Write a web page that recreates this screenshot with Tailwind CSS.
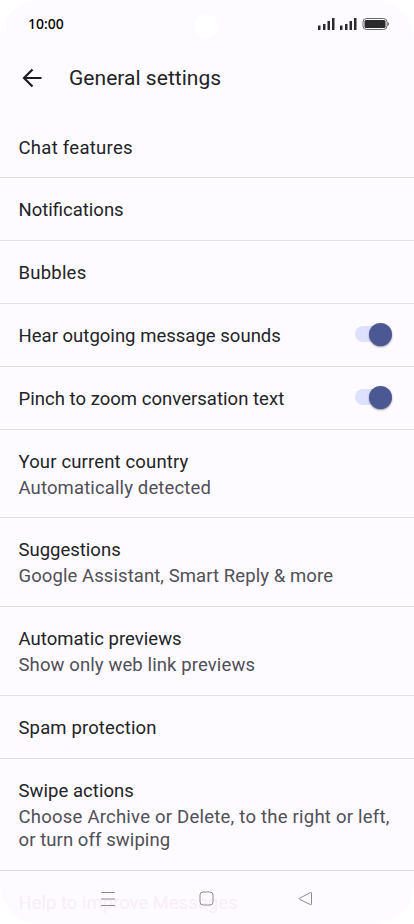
<!DOCTYPE html>
<html lang="en">
<head>
    <meta charset="UTF-8">
    <meta name="viewport" content="width=device-width, initial-scale=1.0">
    <title>General settings</title>
    <script src="https://cdn.jsdelivr.net/npm/@tailwindcss/browser@4"></script>
</head>
<body class="bg-white">
    <div class="relative flex flex-col w-[414px] h-[924px] overflow-hidden rounded-[40px] bg-[#fdfbff] font-['Roboto',sans-serif] text-[18.5px] leading-[24px] text-[#232327]">

        <!-- Status bar -->
        <div class="flex shrink-0 items-center justify-between h-12 pl-7 pr-6">
            <span class="font-['Noto_Sans',sans-serif] text-sm font-medium leading-5 text-black">10:00</span>
            <div class="absolute left-[194px] top-[14px] size-6 rounded-full bg-white"></div>
            <svg class="w-[72px] h-3" viewBox="0 0 72 12" fill="#2a2a2c">
                <path d="M0 7.500h2.500v4.500H0zM5 6h2.500v6H5zM9.500 3h2.500v9H9.500zM14 0h2.500v12h-2.500zM22 7.500h2.500v4.500H22zM27 6h2.500v6h-2.500zM31.500 3h2.500v9H31.500zM36 0h2.500v12h-2.500z"/>
                <rect x="45" y=".5" width="24" height="11" rx="3.500" fill="none" stroke="#67676a"/>
                <rect x="46.500" y="2" width="21" height="8" rx="1.500"/>
                <path d="M69.500 4q1.500 .5 1.500 2t-1.500 2z" fill="#67676a"/>
            </svg>
        </div>

        <!-- App bar -->
        <div class="flex shrink-0 items-center h-[68px] pl-[22px] pb-2">
            <svg class="size-5" viewBox="0 0 20 20" fill="none" stroke="#1b1b1f" stroke-width="2.200">
                <path d="M19.500 10H2.500M10.500 1.500L2 10l8.500 8.500"/>
            </svg>
            <h1 class="ml-[27px] text-[21px] leading-7 font-normal tracking-[0.03px] whitespace-nowrap">General settings</h1>
        </div>

        <!-- Settings list -->
        <div class="flex flex-col shrink-0 whitespace-nowrap">
            <div class="flex items-center h-[62px] px-[18.5px] pt-0.5 border-b border-[#e0dfe3]"><span class="tracking-[0.28px]">Chat features</span></div>
            <div class="flex items-center h-[63px] px-[18.5px] pt-0.5 border-b border-[#e0dfe3]"><span>Notifications</span></div>
            <div class="flex items-center h-[63px] px-[18.5px] pt-0.5 border-b border-[#e0dfe3]"><span class="tracking-[0.22px]">Bubbles</span></div>
            <div class="flex items-center justify-between h-[63px] pl-[18.5px] pr-[22.5px] border-b border-[#e0dfe3]">
                <span class="pt-0.5 tracking-[0.02px]">Hear outgoing message sounds</span>
                <div class="flex items-center justify-end w-[37px] h-4 mb-0.5 rounded-full bg-[#dde1ff]">
                    <div class="size-[23px] shrink-0 rounded-full bg-[#4b5893] shadow-[0_1px_2px_rgba(0,0,0,0.4)]"></div>
                </div>
            </div>
            <div class="flex items-center justify-between h-[63px] pl-[18.5px] pr-[22.5px] border-b border-[#e0dfe3]">
                <span class="pt-0.5 tracking-[0.03px]">Pinch to zoom conversation text</span>
                <div class="flex items-center justify-end w-[37px] h-4 mb-0.5 rounded-full bg-[#dde1ff]">
                    <div class="size-[23px] shrink-0 rounded-full bg-[#4b5893] shadow-[0_1px_2px_rgba(0,0,0,0.4)]"></div>
                </div>
            </div>
            <div class="flex flex-col justify-center gap-0.5 h-[88px] px-[18.5px] pt-0.5 border-b border-[#e0dfe3]">
                <span class="tracking-[0.15px]">Your current country</span>
                <span class="tracking-[0.13px] text-[#504f57]">Automatically detected</span>
            </div>
            <div class="flex flex-col justify-center gap-0.5 h-[89px] px-[18.5px] pt-0.5 border-b border-[#e0dfe3]">
                <span>Suggestions</span>
                <span class="tracking-[0.08px] text-[#504f57]">Google Assistant, Smart Reply &amp; more</span>
            </div>
            <div class="flex flex-col justify-center gap-0.5 h-[89px] px-[18.5px] pt-0.5 border-b border-[#e0dfe3]">
                <span class="tracking-[0.03px]">Automatic previews</span>
                <span class="tracking-[0.11px] text-[#504f57]">Show only web link previews</span>
            </div>
            <div class="flex items-center h-[63px] px-[18.5px] pt-0.5 border-b border-[#e0dfe3]"><span class="tracking-[0.13px]">Spam protection</span></div>
            <div class="flex flex-col justify-center gap-[3px] h-[112px] px-[18.5px] pt-0.5 border-b border-[#dcdbdf]">
                <span class="tracking-[0.05px]">Swipe actions</span>
                <span class="leading-[23px] text-[#504f57]"><span class="tracking-[0.23px]">Choose Archive or Delete, to the right or left,</span><br><span class="tracking-[0.08px]">or turn off swiping</span></span>
            </div>
            <div class="flex items-center h-[63px] px-[18.5px] text-[#f8eff4]"><span>Help to improve Messages</span></div>
        </div>

        <!-- Navigation bar -->
        <div class="absolute inset-x-0 bottom-0 flex items-center justify-between h-[51px] pl-[100px] pr-[101px]">
            <svg class="w-4 h-4" viewBox="0 0 16 16" fill="none" stroke="#8c8b90"><path d="M1 1.500h14M1 8h14M1 14.500h14"/></svg>
            <svg class="w-4 h-4" viewBox="0 0 16 16" fill="none" stroke="#8c8b90"><rect x="1" y="1" width="13" height="13" rx="3"/></svg>
            <svg class="w-4 h-4" viewBox="0 0 16 16" fill="none" stroke="#8c8b90" stroke-linejoin="round"><path d="M14.500 2v11q0 1-1 .6L2.500 8.300q-.8-.5 0-1L13.500 1.500q1-.3 1 .5z"/></svg>
        </div>
    </div>
</body>
</html>
